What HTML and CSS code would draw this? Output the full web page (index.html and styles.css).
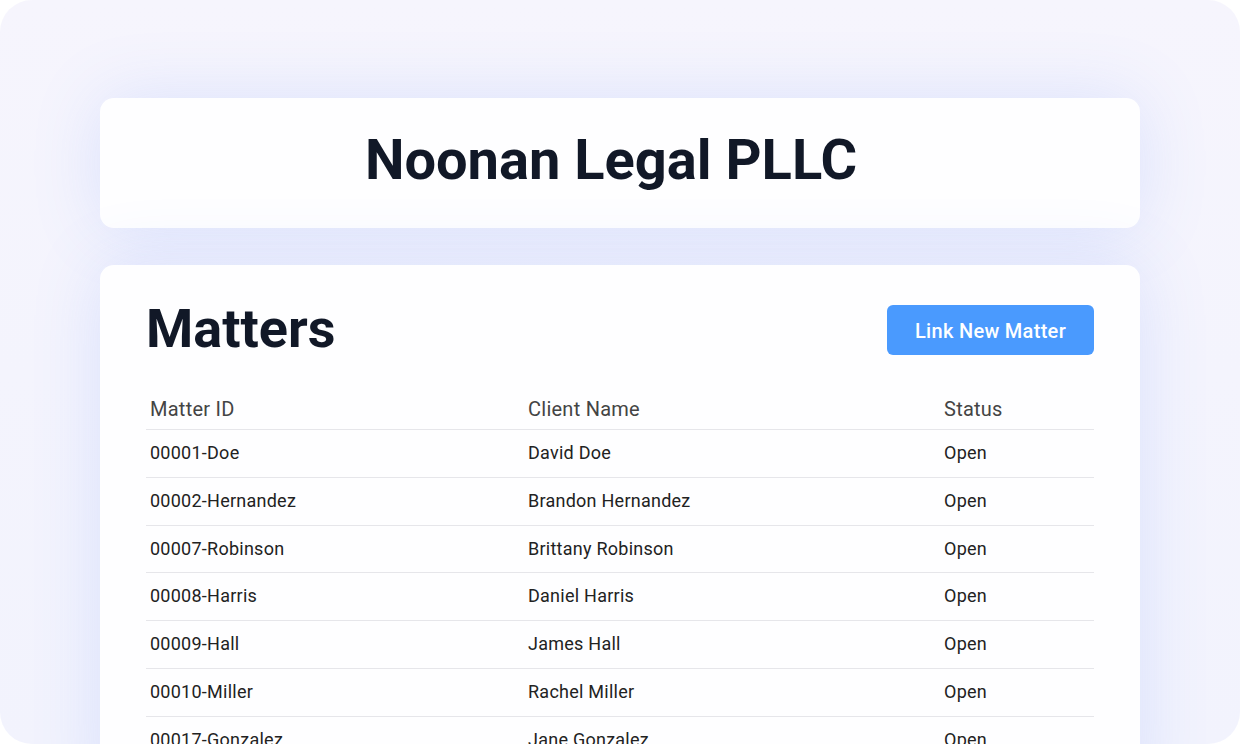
FILE: index.html
```html
<!DOCTYPE html>
<html lang="en">
<head>
  <meta charset="UTF-8">
  <title>Noonan Legal PLLC - Matters</title>
  <link rel="stylesheet" href="styles.css">
</head>
<body>

  <div class="frame">
    <!-- FIRM HEADER -->
    <header class="card firm-card">
      <h1>Noonan Legal PLLC</h1>
    </header>

    <!-- MATTERS LIST -->
    <section class="card matters-card">
      <div class="matters-head">
        <h2>Matters</h2>
        <button class="link-btn">Link New Matter</button>
      </div>
      <table class="matters-table">
        <thead>
          <tr>
            <th class="col-id">Matter ID</th><th class="col-client">Client Name</th><th>Status</th>
          </tr>
        </thead>
        <tbody>
          <tr><td>00001-Doe</td><td>David Doe</td><td>Open</td></tr>
          <tr><td>00002-Hernandez</td><td>Brandon Hernandez</td><td>Open</td></tr>
          <tr><td>00007-Robinson</td><td>Brittany Robinson</td><td>Open</td></tr>
          <tr><td>00008-Harris</td><td>Daniel Harris</td><td>Open</td></tr>
          <tr><td>00009-Hall</td><td>James Hall</td><td>Open</td></tr>
          <tr><td>00010-Miller</td><td>Rachel Miller</td><td>Open</td></tr>
          <tr><td>00017-Gonzalez</td><td>Jane Gonzalez</td><td>Open</td></tr>
        </tbody>
      </table>
    </section>
  </div>

</body>
</html>
```

FILE: styles.css
```css
body {
  font-family: Roboto, 'Liberation Sans', sans-serif;
  margin: 0;
  background-color: white;
}

.frame {
  height: 744px;
  box-sizing: border-box;
  padding: 98px 100px 0;
  border-radius: 32px;
  overflow: hidden;
  background: linear-gradient(180deg, #f6f5fd 0%, #f2f3fd 100%);
}

.card {
  background-color: #fefeff;
  border-radius: 14px;
  box-shadow: 0 0 70px rgba(90, 130, 250, 0.16);
}

.firm-card {
  height: 130px;
  display: flex;
  align-items: center;
  justify-content: center;
  margin-bottom: 37px;
}

.firm-card h1 {
  margin: 0 18px 6px 0;
  font-size: 56px;
  font-weight: bold;
  color: #111827;
}

.matters-card {
  padding: 40px 46px 40px;
}

.matters-head {
  display: flex;
  justify-content: space-between;
  align-items: center;
  height: 50px;
  margin-bottom: 34px;
}

.matters-head h2 {
  margin: 0 0 4px;
  font-size: 54px;
  font-weight: bold;
  color: #111827;
}

.link-btn {
  width: 207px;
  height: 50px;
  padding-top: 3px;
  background-color: #4a9afe;
  color: white;
  border: none;
  border-radius: 6px;
  font-family: inherit;
  font-size: 20px;
  font-weight: 500;
  letter-spacing: 0.3px;
  cursor: pointer;
}

.link-btn:hover {
  background-color: #3a86ea;
}

.matters-table {
  width: 100%;
  border-collapse: collapse;
}

.matters-table th,
.matters-table td {
  text-align: left;
  padding: 10px 4px;
  border-bottom: 1px solid #e6e6ea;
  letter-spacing: 0.25px;
}

.matters-table th {
  font-size: 20px;
  font-weight: normal;
  color: #444;
  line-height: 30px;
  padding-top: 5px;
  padding-bottom: 5px;
}

.matters-table td {
  font-size: 18px;
  color: #222;
  line-height: 26.75px;
}

.col-id {
  width: 370px;
}

.col-client {
  width: 408px;
}
```
